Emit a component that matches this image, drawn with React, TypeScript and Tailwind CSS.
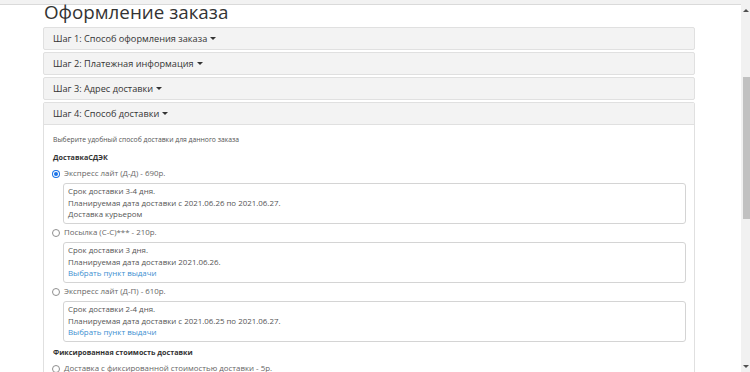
import React from 'react';

const font = { fontFamily: '"Open Sans", "Noto Sans", sans-serif' };

function Caret() {
    return <span className="inline-block ml-[3px] align-middle w-0 h-0 border-l-[3px] border-r-[3px] border-t-[3px] border-l-transparent border-r-transparent border-t-[#333]" />;
}

function StepHeader({ title }: { title: string }) {
    return (
        <div className="h-[23px] mb-[2px] rounded-[2px] border border-[#e0e0e0] bg-[#f3f3f3] pl-[9px] flex items-center text-[9.2px] text-[#333]">
            <span>{title}</span>
            <Caret />
        </div>
    );
}

function Radio({ checked }: { checked?: boolean }) {
    if (checked) {
        return (
            <span className="w-[8px] h-[8px] rounded-full bg-[#1a73e8] flex items-center justify-center shrink-0">
                <span className="w-[4px] h-[4px] rounded-full bg-[#1a73e8] ring-1 ring-white" />
            </span>
        );
    }
    return <span className="w-[8px] h-[8px] rounded-full border border-[#8f8f8f] bg-white shrink-0" />;
}

type Option = {
    label: string;
    checked?: boolean;
    lines: string[];
    link?: string;
};

function DeliveryOption({ opt }: { opt: Option }) {
    return (
        <div>
            <div className="flex items-center h-[16px] gap-[4px] -ml-[1px]">
                <Radio checked={opt.checked} />
                <span className="text-[7.9px] text-[#666]">{opt.label}</span>
            </div>
            <div className="ml-[10px] mr-[8px] mt-[1px] mb-[1px] h-[41px] border border-[#d4d4d4] rounded-[3px] px-[4px] pt-[2px] text-[7.9px] text-[#555] leading-[11.5px]">
                {opt.lines.map((l) => (
                    <div key={l}>{l}</div>
                ))}
                {opt.link && <div className="text-[#3d8fd1]">{opt.link}</div>}
            </div>
        </div>
    );
}

const options: Option[] = [
    {
        label: 'Экспресс лайт (Д-Д) - 690р.',
        checked: true,
        lines: ['Срок доставки 3-4 дня.', 'Планируемая дата доставки с 2021.06.26 по 2021.06.27.', 'Доставка курьером'],
    },
    {
        label: 'Посылка (С-С)*** - 210р.',
        lines: ['Срок доставки 3 дня.', 'Планируемая дата доставки 2021.06.26.'],
        link: 'Выбрать пункт выдачи',
    },
    {
        label: 'Экспресс лайт (Д-П) - 610р.',
        lines: ['Срок доставки 2-4 дня.', 'Планируемая дата доставки с 2021.06.25 по 2021.06.27.'],
        link: 'Выбрать пункт выдачи',
    },
];

export default function App() {
    return (
        <div className="w-[750px] h-[372px] overflow-hidden bg-white flex" style={font}>
            <div className="flex-1 min-w-0">
                <div className="h-[5px] bg-[#f2f2f2] border-b border-[#dadada]" />
                <div className="pl-[43px] pr-[46px]">
                    <h1 className="text-[18.8px] leading-[14px] h-[22px] pl-[1px] text-[#333]">Оформление заказа</h1>
                    <StepHeader title="Шаг 1: Способ оформления заказа" />
                    <StepHeader title="Шаг 2: Платежная информация" />
                    <StepHeader title="Шаг 3: Адрес доставки" />
                    <div className="rounded-t-[2px] border border-[#e0e0e0]">
                        <div className="h-[22px] bg-[#f3f3f3] border-b border-[#e0e0e0] pl-[9px] flex items-center text-[9.2px] text-[#333]">
                            <span>Шаг 4: Способ доставки</span>
                            <Caret />
                        </div>
                        <div className="pl-[9px] pt-[9px] h-[260px]">
                            <div className="text-[6.8px] text-[#555] leading-[12px]">Выберите удобный способ доставки для данного заказа</div>
                            <div className="text-[7.2px] font-bold text-[#333] mt-[5px] leading-[12px]">ДоставкаСДЭК</div>
                            <div className="mt-[3px]">
                                {options.map((o) => (
                                    <DeliveryOption key={o.label} opt={o} />
                                ))}
                            </div>
                            <div className="text-[7.2px] font-bold text-[#333] mt-[4px] leading-[12px]">Фиксированная стоимость доставки</div>
                            <div className="flex items-center h-[16px] gap-[4px] -ml-[1px] mt-[3px]">
                                <Radio />
                                <span className="text-[7.9px] text-[#666]">Доставка с фиксированной стоимостью доставки - 5р.</span>
                            </div>
                        </div>
                    </div>
                </div>
            </div>
            {/* scrollbar */}
            <div className="w-[9px] h-full shrink-0 bg-[#f1f1f1] flex flex-col items-end">
                <div className="h-[20px] w-full flex items-center justify-center">
                    <span className="w-0 h-0 border-l-[3px] border-r-[3px] border-b-[3px] border-l-transparent border-r-transparent border-b-[#505050]" />
                </div>
                <div className="mt-[57px] w-[7px] h-[142px] bg-[#c1c1c1]" />
                <div className="flex-1" />
                <div className="h-[12px] w-full flex items-center justify-center">
                    <span className="w-0 h-0 border-l-[3px] border-r-[3px] border-t-[3px] border-l-transparent border-r-transparent border-t-[#505050]" />
                </div>
            </div>
        </div>
    );
}
